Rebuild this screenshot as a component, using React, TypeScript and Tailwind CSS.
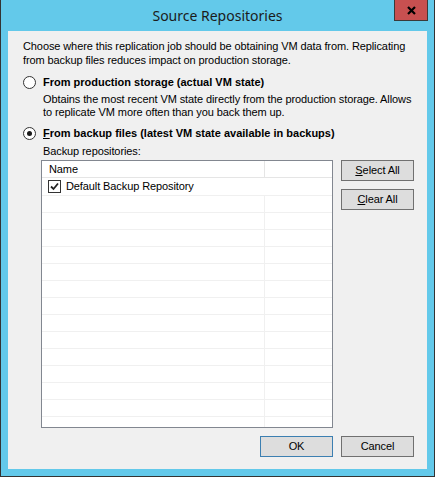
import React from "react";

function Radio({ checked }: { checked?: boolean }) {
  return (
    <span className="flex h-[13px] w-[13px] shrink-0 items-center justify-center rounded-full border border-[#333333] bg-white">
      {checked && <span className="h-[5px] w-[5px] rounded-full bg-[#1a1a1a]" />}
    </span>
  );
}

function Btn({ children, primary }: { children: React.ReactNode; primary?: boolean }) {
  return (
    <button
      className={
        primary
          ? "flex h-[21px] w-[73px] items-center justify-center border border-[#3c7fb1] bg-[#dddddd] text-[11px] tracking-[-0.1px] text-black"
          : "flex h-[21px] w-[73px] items-center justify-center border border-[#707070] bg-[#dddddd] text-[11px] tracking-[-0.1px] text-black"
      }
    >
      {children}
    </button>
  );
}

export default function App() {
  const rows = Array.from({ length: 14 });

  return (
    <div
      className="flex h-[477px] w-[435px] flex-col overflow-hidden border border-t-0 border-[#333333] bg-[#63c9ea] text-[#000000]"
      style={{ fontFamily: '"Liberation Sans", Arial, sans-serif' }}
    >
      {/* title bar */}
      <div className="relative flex h-[31px] shrink-0 items-center justify-center">
        <span
          className="text-[14px] text-[#1b1b1b]"
          style={{ fontFamily: '"Noto Sans", "Open Sans", sans-serif' }}
        >
          Source Repositories
        </span>
        <div className="absolute right-[6px] top-0 flex h-[21px] w-[34px] items-center justify-center border-x border-b border-[#3a3a3a] bg-[#c75050]">
          <svg width="9" height="9" viewBox="0 0 9 9">
            <path d="M1 1 L8 8 M8 1 L1 8" stroke="#000" strokeWidth="2.2" />
          </svg>
        </div>
      </div>

      {/* client */}
      <div className="mx-[7px] mb-[7px] flex min-h-0 flex-1 flex-col whitespace-nowrap bg-[#f0f0f0] pb-[12px] pl-[15px] pr-[13px] pt-[8px] text-[11px] tracking-[-0.1px]">
        <p className="leading-[14px]">
          Choose where this replication job should be obtaining VM data from. Replicating
          <br />
          from backup files reduces impact on production storage.
        </p>

        <div className="mt-[8px] flex items-center gap-[7px] leading-[14px]">
          <Radio />
          <span className="font-bold tracking-normal">From production storage (actual VM state)</span>
        </div>
        <p className="ml-[20px] mt-[4px] leading-[13px]">
          Obtains the most recent VM state directly from the production storage. Allows
          <br />
          to replicate VM more often than you back them up.
        </p>

        <div className="mt-[7px] flex items-center gap-[7px] leading-[14px]">
          <Radio checked />
          <span className="font-bold tracking-normal">
            <span className="underline">F</span>rom backup files (latest VM state available in backups)
          </span>
        </div>
        <div className="ml-[20px] mt-[5px] leading-[13px]">Backup repositories:</div>

        <div className="mt-[2px] flex min-h-0 flex-1">
          <div className="ml-[18px] flex w-[292px] flex-col overflow-hidden border border-[#828790] bg-white">
            <div className="flex h-[17px] shrink-0 border-b border-[#e5e5e5]">
              <div className="flex w-[223px] items-center border-r border-[#e5e5e5] pl-[7px]">Name</div>
              <div className="flex-1" />
            </div>
            <div className="flex h-[17px] shrink-0 items-center pl-[6px]">
              <span className="flex h-[13px] w-[13px] items-center justify-center border border-[#333333] bg-white">
                <svg width="9" height="9" viewBox="0 0 9 9">
                  <path d="M1 4.5 L3.5 7 L8 1.5" fill="none" stroke="#222" strokeWidth="1.8" />
                </svg>
              </span>
              <span className="ml-[5px]">Default Backup Repository</span>
            </div>
            {rows.map((_, i) => (
              <div key={i} className="flex h-[17px] shrink-0 border-t border-[#f0f0f0]">
                <div className="w-[223px] border-r border-[#f0f0f0]" />
              </div>
            ))}
          </div>

          <div className="ml-[8px] flex flex-col gap-[8px]">
            <Btn>
              <span className="underline">S</span>elect All
            </Btn>
            <Btn>
              <span className="underline">C</span>lear All
            </Btn>
          </div>
        </div>

        <div className="mt-[8px] flex justify-end gap-[8px]">
          <Btn primary>OK</Btn>
          <Btn>Cancel</Btn>
        </div>
      </div>
    </div>
  );
}
